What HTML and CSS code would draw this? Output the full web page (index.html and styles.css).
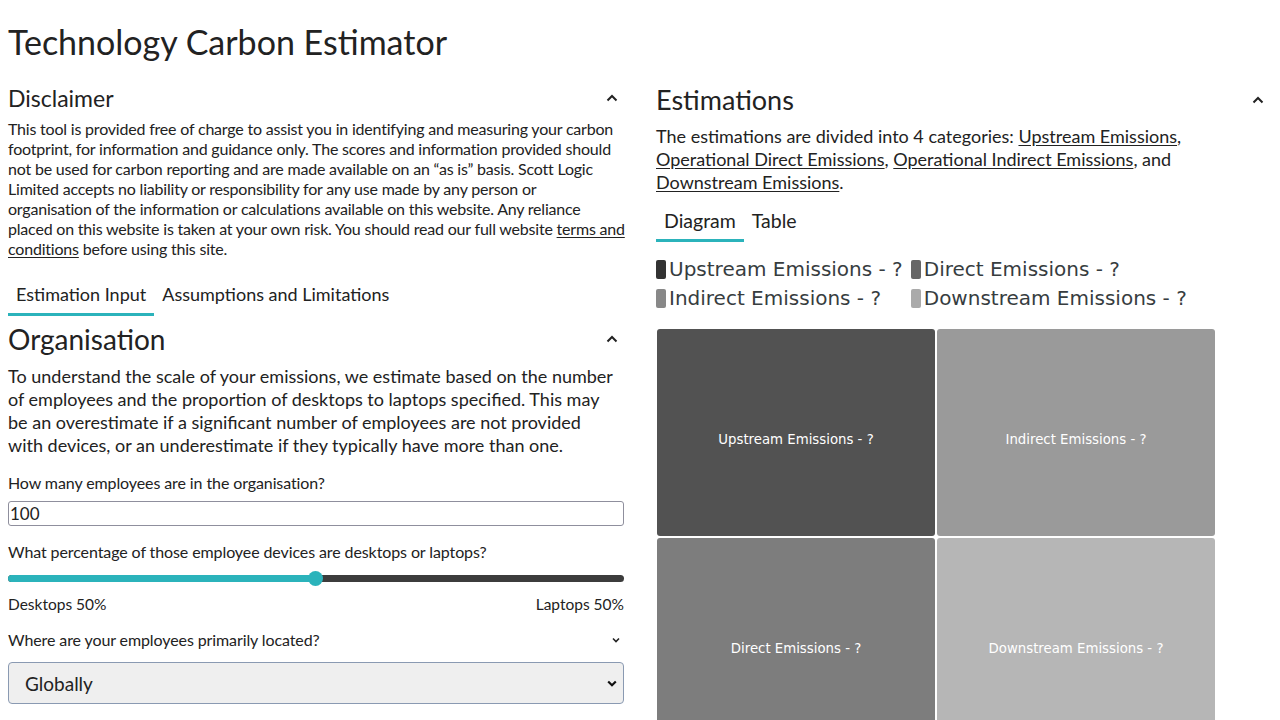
FILE: index.html
```html
<!DOCTYPE html>
<html lang="en">
<head>
<meta charset="utf-8">
<title>Technology Carbon Estimator</title>
<link rel="stylesheet" href="styles.css">
</head>
<body>
<main class="page">
  <h1 class="title">Technology Carbon Estimator</h1>
  <div class="columns">
    <section class="col">
      <div class="section-head">
        <h2 class="h-disclaimer">Disclaimer</h2>
        <svg class="chev" viewBox="0 0 12 8" width="12" height="8"><path d="M1.5 6.5 6 2l4.5 4.5" fill="none" stroke="#222" stroke-width="2"/></svg>
      </div>
      <p class="disclaimer">This tool is provided free of charge to assist you in identifying and measuring your carbon<br>footprint, for information and guidance only. The scores and information provided should<br>not be used for carbon reporting and are made available on an “as is” basis. Scott Logic<br>Limited accepts no liability or responsibility for any use made by any person or<br>organisation of the information or calculations available on this website. Any reliance<br>placed on this website is taken at your own risk. You should read our full website <a href="#">terms and<br>conditions</a> before using this site.</p>

      <nav class="tabs">
        <span class="tab active">Estimation Input</span>
        <span class="tab">Assumptions and Limitations</span>
      </nav>

      <div class="section-head org-head">
        <h2 class="h-section h-org">Organisation</h2>
        <svg class="chev" viewBox="0 0 12 8" width="12" height="8"><path d="M1.5 6.5 6 2l4.5 4.5" fill="none" stroke="#222" stroke-width="2"/></svg>
      </div>
      <p class="lead lead-org">To understand the scale of your emissions, we estimate based on the number<br>of employees and the proportion of desktops to laptops specified. This may<br>be an overestimate if a significant number of employees are not provided<br>with devices, or an underestimate if they typically have more than one.</p>

      <label class="label label-first">How many employees are in the organisation?</label>
      <div class="input">100</div>

      <label class="label label-slider">What percentage of those employee devices are desktops or laptops?</label>
      <div class="slider">
        <div class="track-fill" style="width:50%"></div>
        <div class="thumb"></div>
      </div>
      <div class="slider-labels"><span>Desktops 50%</span><span>Laptops 50%</span></div>

      <div class="label-row">
        <span class="label">Where are your employees primarily located?</span>
        <svg class="small-chev" viewBox="0 0 8 6" width="8" height="6"><path d="M1 1.5 4 4.5 7 1.5" fill="none" stroke="#222" stroke-width="1.6"/></svg>
      </div>
      <div class="select">
        <span>Globally</span>
        <svg viewBox="0 0 10 7" width="10" height="7"><path d="M1.2 1.5 5 5.2 8.8 1.5" fill="none" stroke="#111" stroke-width="2.2"/></svg>
      </div>
    </section>

    <section class="col">
      <div class="section-head est-head">
        <h2 class="h-section">Estimations</h2>
        <svg class="chev" viewBox="0 0 12 8" width="12" height="8"><path d="M1.5 6.5 6 2l4.5 4.5" fill="none" stroke="#222" stroke-width="2"/></svg>
      </div>
      <p class="lead lead-est">The estimations are divided into 4 categories: <a href="#">Upstream Emissions</a>,<br><a href="#">Operational Direct Emissions</a>, <a href="#">Operational Indirect Emissions</a>, and<br><a href="#">Downstream Emissions</a>.</p>

      <nav class="tabs tabs-right">
        <span class="tab active">Diagram</span>
        <span class="tab">Table</span>
      </nav>

      <div class="legend">
        <span class="legend-item"><i class="mk mk1"></i>Upstream Emissions - ?</span>
        <span class="legend-item"><i class="mk mk2"></i>Direct Emissions - ?</span>
        <span class="legend-item"><i class="mk mk3"></i>Indirect Emissions - ?</span>
        <span class="legend-item"><i class="mk mk4"></i>Downstream Emissions - ?</span>
      </div>

      <div class="treemap">
        <div class="cell c1">Upstream Emissions - ?</div>
        <div class="cell c2">Indirect Emissions - ?</div>
        <div class="cell c3">Direct Emissions - ?</div>
        <div class="cell c4">Downstream Emissions - ?</div>
      </div>
    </section>
  </div>
</main>
</body>
</html>
```

FILE: styles.css
```css
* { box-sizing: border-box; }
html, body { margin: 0; padding: 0; }
body {
  font-family: "Lato", "Noto Sans", sans-serif;
  color: #222;
  background: #fff;
  overflow: hidden;
}
.page { padding: 0 8px; }
.title {
  font-size: 34px;
  font-weight: 400;
  margin: 0;
  padding-top: 22px;
  line-height: 40px;
  letter-spacing: 0;
}
.columns {
  display: grid;
  grid-template-columns: 616px 616px;
  column-gap: 32px;
  margin-top: 18px;
}
.section-head {
  display: flex;
  justify-content: space-between;
  align-items: center;
  padding-right: 6px;
}
.h-disclaimer { font-size: 23px; font-weight: 400; margin: 0; line-height: 36px; }
.h-section { font-size: 27px; font-weight: 400; margin: 0; line-height: 36px; }
.h-org { font-size: 28px; }
.disclaimer {
  font-size: 16px;
  line-height: 20px;
  margin: 3px 0 0;
  letter-spacing: -0.2px;
  white-space: nowrap;
}
a { color: #222; text-decoration: underline; text-underline-offset: 2px; }
.tabs { display: flex; margin-top: 21px; }
.tab {
  font-size: 18px;
  line-height: 24px;
  padding: 2px 8px 7px;
  border-bottom: 3px solid transparent;
}
.tab.active { border-bottom-color: #2bb3bb; }
.org-head { margin-top: 5px; }
.lead {
  font-size: 18px;
  line-height: 23px;
  margin: 0;
  white-space: nowrap;
}
.lead-org { margin-top: 8px; }
.lead-est { margin-top: 7px; }
.label {
  display: block;
  font-size: 16px;
  line-height: 20px;
  letter-spacing: -0.1px;
}
.label-first { margin-top: 16px; }
.input {
  margin-top: 8px;
  height: 25px;
  border: 1px solid #8f8f9d;
  border-radius: 3px;
  font-size: 17px;
  line-height: 23px;
  padding: 0 1px;
}
.label-slider { margin-top: 16px; }
.slider {
  position: relative;
  margin-top: 13px;
  height: 7px;
  border-radius: 4px;
  background: #3c3c3c;
}
.track-fill { height: 100%; background: #2bb3bb; border-radius: 4px 0 0 4px; }
.thumb {
  position: absolute;
  left: calc(50% - 8px);
  top: -4px;
  width: 15px;
  height: 15px;
  border-radius: 50%;
  background: #2bb3bb;
}
.slider-labels {
  display: flex;
  justify-content: space-between;
  font-size: 15.5px;
  line-height: 20px;
  margin-top: 12px;
}
.label-row {
  display: flex;
  justify-content: space-between;
  align-items: center;
  margin-top: 16px;
  padding-right: 4px;
}
.select {
  margin-top: 12px;
  height: 42px;
  background: #efefef;
  border: 1px solid #8a9ab2;
  border-radius: 4px;
  display: flex;
  align-items: center;
  justify-content: space-between;
  padding: 0 6px 0 16px;
  font-size: 19px;
}
.est-head { margin-top: 2px; padding-right: 8px; }
.tabs-right { margin-top: 13px; }
.tabs-right .tab { font-size: 19.5px; padding-bottom: 6px; }
.legend {
  display: grid;
  grid-template-columns: auto auto;
  justify-content: start;
  column-gap: 8px;
  row-gap: 5px;
  margin-top: 15px;
  font-family: "DejaVu Sans", sans-serif;
  font-size: 20px;
  color: #373d3f;
}
.legend-item { display: flex; align-items: center; line-height: 24px; }
.mk {
  display: inline-block;
  width: 10px;
  height: 19px;
  border-radius: 2px;
  margin-right: 3px;
}
.mk1 { background: #333333; }
.mk2 { background: #666666; }
.mk3 { background: #888888; }
.mk4 { background: #aaaaaa; }
.treemap {
  margin-top: 19px;
  margin-left: 1px;
  width: 558px;
  display: grid;
  grid-template-columns: 278px 278px;
  grid-template-rows: 207px 207px;
  gap: 2px;
}
.cell {
  display: flex;
  align-items: center;
  justify-content: center;
  padding-top: 13px;
  color: #fff;
  font-family: "DejaVu Sans", sans-serif;
  font-size: 13.3px;
  border-radius: 3px;
}
.c1 { background: #525252; }
.c2 { background: #9a9a9a; }
.c3 { background: #7d7d7d; }
.c4 { background: #b6b6b6; }
```
